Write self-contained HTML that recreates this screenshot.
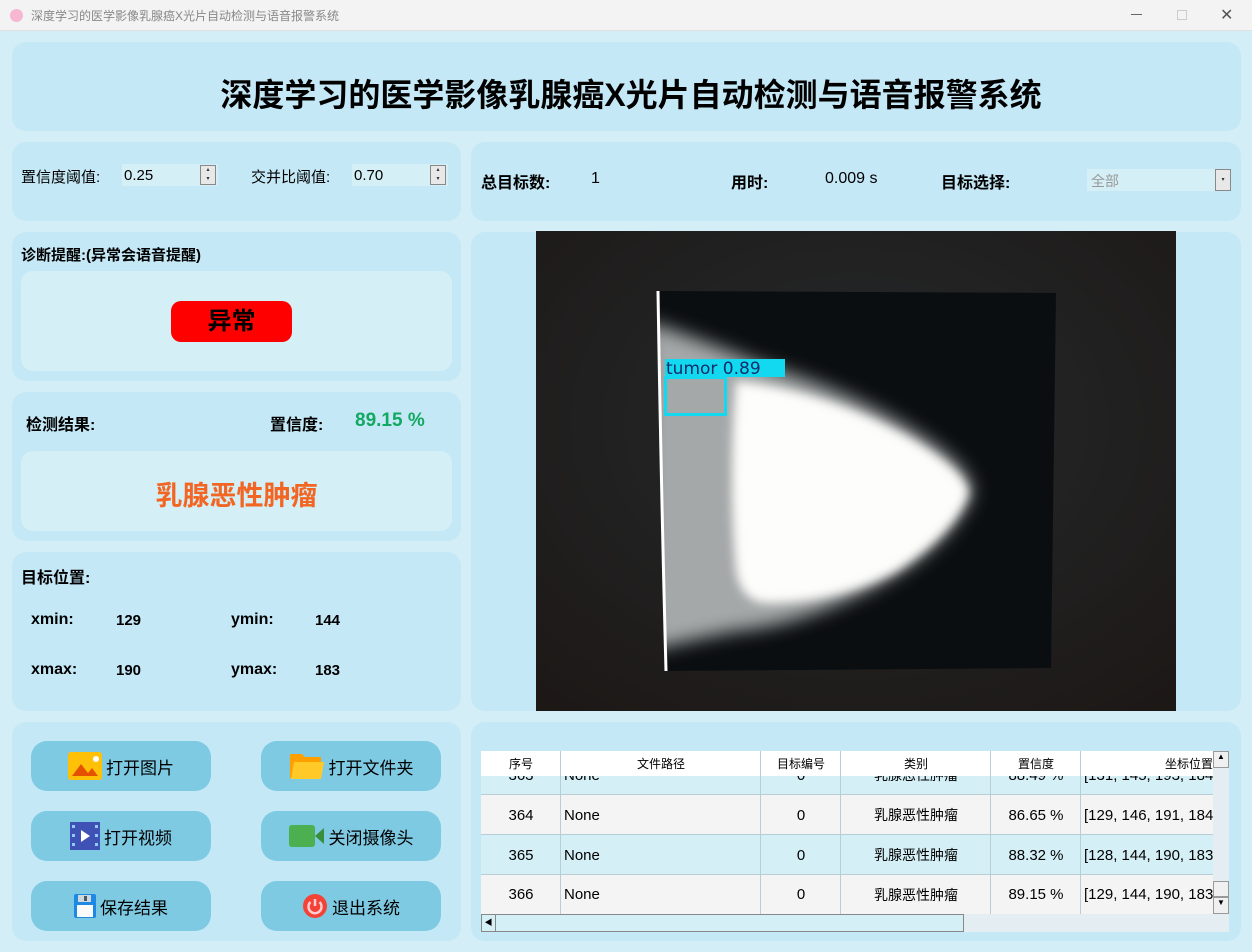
<!DOCTYPE html>
<html><head><meta charset="utf-8"><style>
*{margin:0;padding:0;box-sizing:border-box}
body{width:1252px;height:952px;background:#d3eef6;font-family:"Liberation Sans","Noto Sans CJK SC",sans-serif;position:relative;overflow:hidden;color:#000}
.a{position:absolute}
.p{position:absolute;background:#c4e8f6;border-radius:14px}
.in{position:absolute;background:#d4eff6;border-radius:12px}
.b{position:absolute;font-weight:bold}
.btn{position:absolute;width:180px;height:50px;background:#7ecae3;border-radius:16px;font-size:17px;display:flex;align-items:center;justify-content:center;gap:4px}
.spin{position:absolute;background:#d4eff6;height:22px;font-size:15px;padding:3px 2px}
.sb{position:absolute;width:16px;height:20px;border:1px solid #888;background:#e8e8e8;font-size:6px;line-height:9px;text-align:center;color:#333}
.tb{font-family:"Liberation Sans Narrow","Liberation Sans","Noto Sans CJK SC",sans-serif}
.cell{position:absolute;font-size:15px;display:flex;align-items:center}
</style></head><body>
<div class="a" style="left:0;top:0;width:1252px;height:31px;background:#f3f3f3;border-bottom:1px solid #e0e0e0"></div>
<div class="a" style="left:10px;top:9px;width:13px;height:13px;border-radius:50%;background:#f7b6d2"></div>
<div class="a" style="left:31px;top:7px;font-size:12px;color:#888">深度学习的医学影像乳腺癌X光片自动检测与语音报警系统</div>
<div class="a" style="left:1131px;top:14px;width:11px;height:1px;background:#666"></div>
<div class="a" style="left:1177px;top:10px;width:10px;height:10px;border:1px solid #ccc"></div>
<div class="a" style="left:1220px;top:5px;font-size:16px;color:#555">✕</div>

<div class="p" style="left:12px;top:42px;width:1229px;height:89px"></div>
<div class="b" style="left:0;width:1262px;top:70px;text-align:center;font-size:32px">深度学习的医学影像乳腺癌X光片自动检测与语音报警系统</div>

<div class="p" style="left:12px;top:142px;width:449px;height:79px"></div>
<div class="a" style="left:21px;top:166px;font-size:15px">置信度阈值:</div>
<div class="spin" style="left:122px;top:164px;width:96px">0.25</div>
<div class="sb" style="left:200px;top:165px">▴<br>▾</div>
<div class="a" style="left:251px;top:166px;font-size:15px">交并比阈值:</div>
<div class="spin" style="left:352px;top:164px;width:96px">0.70</div>
<div class="sb" style="left:430px;top:165px">▴<br>▾</div>

<div class="p" style="left:471px;top:142px;width:770px;height:79px"></div>
<div class="b" style="left:481px;top:169px;font-size:16px">总目标数:</div>
<div class="a" style="left:591px;top:170px;font-size:16px">1</div>
<div class="b" style="left:731px;top:169px;font-size:16px">用时:</div>
<div class="a" style="left:825px;top:170px;font-size:16px">0.009 s</div>
<div class="b" style="left:941px;top:169px;font-size:16px">目标选择:</div>
<div class="a" style="left:1087px;top:169px;width:144px;height:22px;background:#d4eff6;font-size:14px;color:#999;padding:2px 4px">全部</div>
<div class="sb" style="left:1215px;top:169px;height:22px;line-height:20px">▾</div>

<div class="p" style="left:12px;top:232px;width:449px;height:149px"></div>
<div class="b" style="left:21px;top:244px;font-size:15px">诊断提醒:(异常会语音提醒)</div>
<div class="in" style="left:21px;top:271px;width:431px;height:100px"></div>
<div class="b" style="left:171px;top:301px;width:121px;height:41px;background:#ff0000;border-radius:10px;font-size:24px;text-align:center;line-height:41px">异常</div>

<div class="p" style="left:12px;top:392px;width:449px;height:149px"></div>
<div class="b" style="left:26px;top:411px;font-size:16px">检测结果:</div>
<div class="b" style="left:270px;top:411px;font-size:16px">置信度:</div>
<div class="b" style="left:355px;top:410px;font-size:19px;color:#13a861">89.15 %</div>
<div class="in" style="left:21px;top:451px;width:431px;height:80px"></div>
<div class="b" style="left:21px;width:431px;top:474px;text-align:center;font-size:27px;color:#f26522">乳腺恶性肿瘤</div>

<div class="p" style="left:12px;top:552px;width:449px;height:159px"></div>
<div class="b" style="left:21px;top:564px;font-size:16px">目标位置:</div>
<div class="b" style="left:31px;top:611px;font-size:16px">xmin:</div><div class="b" style="left:116px;top:612px;font-size:15px">129</div>
<div class="b" style="left:231px;top:611px;font-size:16px">ymin:</div><div class="b" style="left:315px;top:612px;font-size:15px">144</div>
<div class="b" style="left:31px;top:661px;font-size:16px">xmax:</div><div class="b" style="left:116px;top:662px;font-size:15px">190</div>
<div class="b" style="left:231px;top:661px;font-size:16px">ymax:</div><div class="b" style="left:315px;top:662px;font-size:15px">183</div>

<div class="p" style="left:471px;top:232px;width:770px;height:479px"></div>
<svg class="a" style="left:536px;top:231px" width="640" height="480" viewBox="0 0 640 480">
<defs>
<radialGradient id="bg" cx="0.5" cy="0.4" r="0.8"><stop offset="0" stop-color="#262a2c"/><stop offset="1" stop-color="#1c1715"/></radialGradient>
<filter id="bl"><feGaussianBlur stdDeviation="9"/></filter>
<filter id="bl2"><feGaussianBlur stdDeviation="5"/></filter>
<clipPath id="cp"><path d="M122 60 L520 62 L515 437 L130 440 Q125 250 122 60Z"/></clipPath>
</defs>
<rect width="640" height="480" fill="url(#bg)"/>
<path d="M122 60 L520 62 L515 437 L130 440 Q125 250 122 60Z" fill="#0b0e10"/>
<g clip-path="url(#cp)">
<g filter="url(#bl)">
<path d="M110 90 Q170 110 230 135 Q330 165 400 215 Q440 245 435 265 Q410 320 330 360 Q260 395 200 400 Q150 410 110 420Z" fill="#a4a8a8"/>
</g>
<g filter="url(#bl2)">
<path d="M200 150 Q290 160 370 205 Q430 240 432 262 Q420 300 360 340 Q300 372 230 372 Q205 370 200 340 Q192 250 200 150Z" fill="#fdfdfb"/>
</g>
</g>
<path d="M122 60 Q125 250 130 440" stroke="#fff" stroke-width="3" fill="none"/>
<rect x="129" y="128" width="120" height="18" fill="#12d9ef"/>
<text x="130" y="143" font-family="DejaVu Sans,sans-serif" font-size="17" fill="#102b6a">tumor 0.89</text>
<rect x="129.5" y="146.5" width="60" height="37" fill="none" stroke="#12d9ef" stroke-width="3"/>
</svg>

<div class="p" style="left:12px;top:722px;width:449px;height:219px"></div>
<div class="btn" style="left:31px;top:741px"><svg width="34" height="28"><rect width="34" height="28" rx="3" fill="#ffc107"/><path d="M4 24 L13 12 L20 21 L24 16 L30 24Z" fill="#e65100"/><circle cx="28" cy="7" r="3" fill="#fff"/></svg>打开图片</div>
<div class="btn" style="left:261px;top:741px"><svg width="36" height="28"><path d="M1 2 H13 L16 5 H32 V26 H1Z" fill="#ffa000"/><path d="M5 10 H35 L32 27 H2Z" fill="#ffca28"/></svg>打开文件夹</div>
<div class="btn" style="left:31px;top:811px"><svg width="30" height="28"><rect width="30" height="28" fill="#3f51b5"/><g fill="#90caf9"><rect x="2" y="3" width="3" height="3"/><rect x="2" y="12" width="3" height="3"/><rect x="2" y="21" width="3" height="3"/><rect x="25" y="3" width="3" height="3"/><rect x="25" y="12" width="3" height="3"/><rect x="25" y="21" width="3" height="3"/></g><path d="M11 8 L20 14 L11 20Z" fill="#fff"/></svg>打开视频</div>
<div class="btn" style="left:261px;top:811px"><svg width="36" height="22"><rect width="26" height="22" rx="3" fill="#4caf50"/><path d="M26 11 L35 3 V19Z" fill="#388e3c"/></svg>关闭摄像头</div>
<div class="btn" style="left:31px;top:881px"><svg width="22" height="24"><rect width="22" height="24" rx="2" fill="#1e88e5"/><rect x="4" y="1" width="13" height="7" fill="#cfd8dc"/><rect x="10" y="2" width="3" height="5" fill="#455a64"/><rect x="3" y="11" width="16" height="12" fill="#fafafa"/></svg>保存结果</div>
<div class="btn" style="left:261px;top:881px"><svg width="26" height="26"><circle cx="13" cy="13" r="12" fill="#f44336"/><path d="M8.5 9 A6.5 6.5 0 1 0 17.5 9" stroke="#ffcdd2" stroke-width="2.5" fill="none"/><path d="M13 6 V13" stroke="#ffcdd2" stroke-width="2.5"/></svg>退出系统</div>

<div class="p" style="left:471px;top:722px;width:770px;height:219px"></div>
<div class="tb">
<div class="a" style="left:481px;top:776px;width:732px;height:19px;background:#d4eff6"></div>
<div class="a" style="left:481px;top:795px;width:732px;height:40px;background:#f4f4f4"></div>
<div class="a" style="left:481px;top:835px;width:732px;height:40px;background:#d4eff6"></div>
<div class="a" style="left:481px;top:875px;width:732px;height:39px;background:#f4f4f4"></div>
<div class="cell" style="left:481px;top:755px;width:80px;height:40px;justify-content:center">363</div>
<div class="cell" style="left:564px;top:755px;height:40px">None</div>
<div class="cell" style="left:761px;top:755px;width:80px;height:40px;justify-content:center">0</div>
<div class="cell" style="left:841px;top:755px;width:150px;height:40px;justify-content:center;font-size:14px">乳腺恶性肿瘤</div>
<div class="cell" style="left:991px;top:755px;width:90px;height:40px;justify-content:center">88.49 %</div>
<div class="cell" style="left:1084px;top:755px;width:129px;height:40px;overflow:hidden;white-space:nowrap">[131, 145, 193, 184]</div>
<div class="a" style="left:481px;top:751px;width:732px;height:25px;background:#fff"></div>
<div class="a" style="left:481px;top:794px;width:732px;height:1px;background:#b8cdd6"></div>
<div class="a" style="left:481px;top:834px;width:732px;height:1px;background:#b8cdd6"></div>
<div class="a" style="left:481px;top:874px;width:732px;height:1px;background:#b8cdd6"></div>
<div class="a" style="left:560px;top:751px;width:1px;height:163px;background:#b8cdd6"></div>
<div class="a" style="left:760px;top:751px;width:1px;height:163px;background:#b8cdd6"></div>
<div class="a" style="left:840px;top:751px;width:1px;height:163px;background:#b8cdd6"></div>
<div class="a" style="left:990px;top:751px;width:1px;height:163px;background:#b8cdd6"></div>
<div class="a" style="left:1080px;top:751px;width:1px;height:163px;background:#b8cdd6"></div>
<div class="cell" style="left:481px;top:751px;width:80px;height:25px;justify-content:center;font-size:12px">序号</div>
<div class="cell" style="left:561px;top:751px;width:200px;height:25px;justify-content:center;font-size:12px">文件路径</div>
<div class="cell" style="left:761px;top:751px;width:80px;height:25px;justify-content:center;font-size:12px">目标编号</div>
<div class="cell" style="left:841px;top:751px;width:150px;height:25px;justify-content:center;font-size:12px">类别</div>
<div class="cell" style="left:991px;top:751px;width:90px;height:25px;justify-content:center;font-size:12px">置信度</div>
<div class="cell" style="left:1081px;top:751px;width:132px;height:25px;justify-content:flex-end;font-size:12px;overflow:hidden">坐标位置</div>

<div class="cell" style="left:481px;top:795px;width:80px;height:40px;justify-content:center">364</div>
<div class="cell" style="left:564px;top:795px;height:40px">None</div>
<div class="cell" style="left:761px;top:795px;width:80px;height:40px;justify-content:center">0</div>
<div class="cell" style="left:841px;top:795px;width:150px;height:40px;justify-content:center;font-size:14px">乳腺恶性肿瘤</div>
<div class="cell" style="left:991px;top:795px;width:90px;height:40px;justify-content:center">86.65 %</div>
<div class="cell" style="left:1084px;top:795px;width:129px;height:40px;overflow:hidden;white-space:nowrap">[129, 146, 191, 184]</div>

<div class="cell" style="left:481px;top:835px;width:80px;height:40px;justify-content:center">365</div>
<div class="cell" style="left:564px;top:835px;height:40px">None</div>
<div class="cell" style="left:761px;top:835px;width:80px;height:40px;justify-content:center">0</div>
<div class="cell" style="left:841px;top:835px;width:150px;height:40px;justify-content:center;font-size:14px">乳腺恶性肿瘤</div>
<div class="cell" style="left:991px;top:835px;width:90px;height:40px;justify-content:center">88.32 %</div>
<div class="cell" style="left:1084px;top:835px;width:129px;height:40px;overflow:hidden;white-space:nowrap">[128, 144, 190, 183]</div>

<div class="cell" style="left:481px;top:875px;width:80px;height:39px;justify-content:center">366</div>
<div class="cell" style="left:564px;top:875px;height:39px">None</div>
<div class="cell" style="left:761px;top:875px;width:80px;height:39px;justify-content:center">0</div>
<div class="cell" style="left:841px;top:875px;width:150px;height:39px;justify-content:center;font-size:14px">乳腺恶性肿瘤</div>
<div class="cell" style="left:991px;top:875px;width:90px;height:39px;justify-content:center">89.15 %</div>
<div class="cell" style="left:1084px;top:875px;width:129px;height:39px;overflow:hidden;white-space:nowrap">[129, 144, 190, 183]</div>
</div>
<div class="a" style="left:1213px;top:751px;width:16px;height:163px;background:#e4eef2"></div>
<div class="a" style="left:1213px;top:751px;width:16px;height:17px;background:#f0f0f0;border:1px solid #999;font-size:8px;text-align:center">▲</div>
<div class="a" style="left:1213px;top:881px;width:16px;height:16px;background:#f0f0f0;border:1px solid #999"></div>
<div class="a" style="left:1213px;top:897px;width:16px;height:17px;background:#f0f0f0;border:1px solid #999;font-size:8px;text-align:center">▼</div>
<div class="a" style="left:481px;top:914px;width:748px;height:18px;background:#e4eef2"></div>
<div class="a" style="left:481px;top:914px;width:483px;height:18px;background:#d4eff6;border:1px solid #888"></div>
<div class="a" style="left:481px;top:914px;width:15px;height:18px;border:1px solid #888;font-size:8px;text-align:center;line-height:16px">◀</div>
</body></html>
